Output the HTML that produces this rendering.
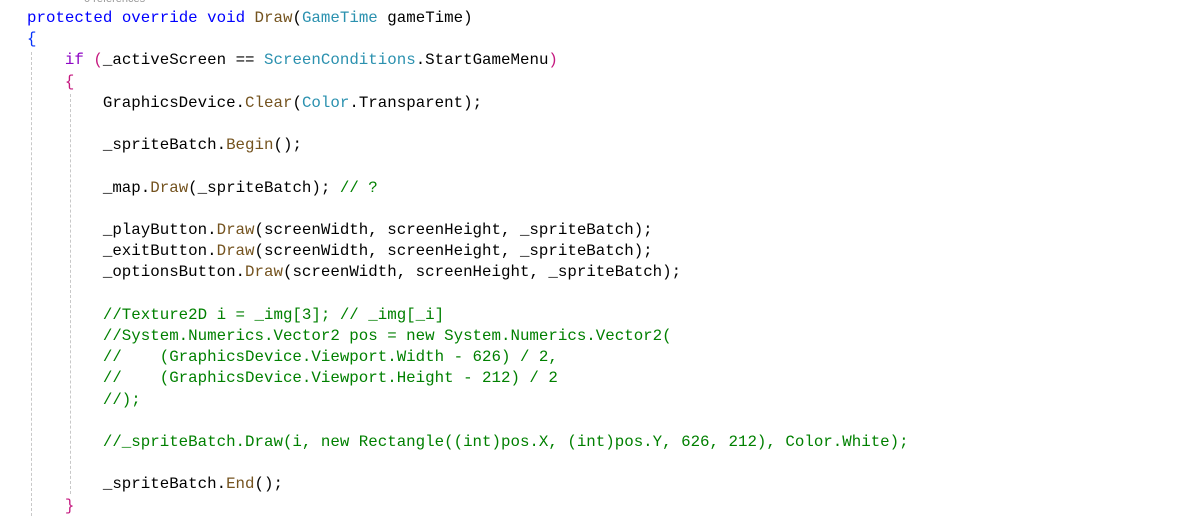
<!DOCTYPE html>
<html><head><style>
body{margin:0;width:1200px;height:516px;background:#fff;overflow:hidden;position:relative;font-family:"Liberation Mono",monospace;}
pre{margin:0;position:absolute;left:27px;top:8px;font-family:"Liberation Mono",monospace;font-size:15.8px;line-height:21.2px;color:#000;}
.k{color:#0000ff}.t{color:#2b91af}.m{color:#74531f}.c{color:#008000}.p{color:#8f08c4}.r{color:#c5187f}.b{color:#0431fa}
.ref{position:absolute;left:84px;top:-7px;font-family:"Liberation Sans",sans-serif;font-size:11px;color:#999;}
.g{position:absolute;width:0;border-left:1px dashed #c8c8c8;}
</style></head><body>
<div class="ref">0 references</div>
<div class="g" style="left:31px;top:52px;height:464px"></div>
<div class="g" style="left:70px;top:94px;height:400px"></div>
<pre><span class="k">protected</span> <span class="k">override</span> <span class="k">void</span> <span class="m">Draw</span>(<span class="t">GameTime</span> gameTime)
<span class="b">{</span>
    <span class="p">if</span> <span class="r">(</span>_activeScreen == <span class="t">ScreenConditions</span>.StartGameMenu<span class="r">)</span>
    <span class="r">{</span>
        GraphicsDevice.<span class="m">Clear</span>(<span class="t">Color</span>.Transparent);

        _spriteBatch.<span class="m">Begin</span>();

        _map.<span class="m">Draw</span>(_spriteBatch); <span class="c">// ?</span>

        _playButton.<span class="m">Draw</span>(screenWidth, screenHeight, _spriteBatch);
        _exitButton.<span class="m">Draw</span>(screenWidth, screenHeight, _spriteBatch);
        _optionsButton.<span class="m">Draw</span>(screenWidth, screenHeight, _spriteBatch);

<span class="c">        //Texture2D i = _img[3]; // _img[_i]
        //System.Numerics.Vector2 pos = new System.Numerics.Vector2(
        //    (GraphicsDevice.Viewport.Width - 626) / 2,
        //    (GraphicsDevice.Viewport.Height - 212) / 2
        //);

        //_spriteBatch.Draw(i, new Rectangle((int)pos.X, (int)pos.Y, 626, 212), Color.White);</span>

        _spriteBatch.<span class="m">End</span>();
    <span class="r">}</span>
</pre>
</body></html>
